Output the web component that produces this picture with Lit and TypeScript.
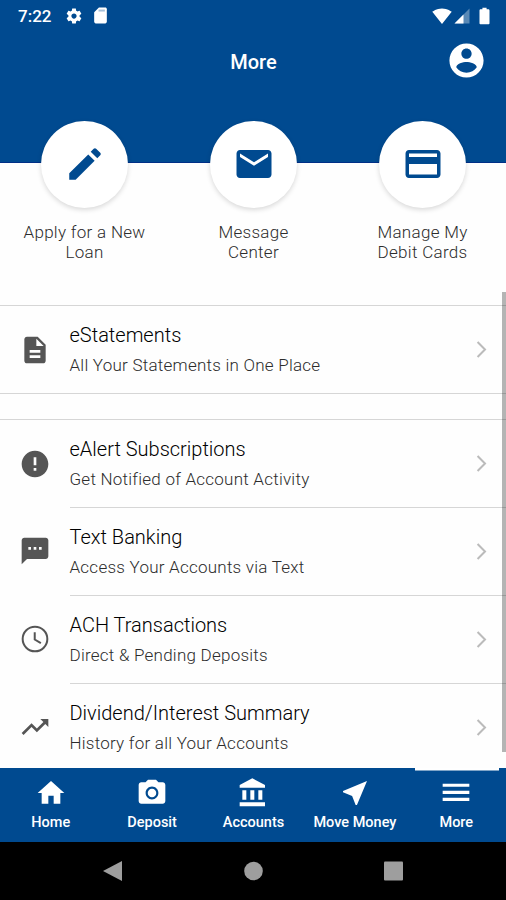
import { LitElement, html, css, svg } from "lit";
import { customElement, property } from "lit/decorators.js";

const ICONS: Record<string, unknown> = {
  gear: svg`<path d="M19.43 12.98c.04-.32.07-.64.07-.98s-.03-.66-.07-.98l2.11-1.65c.19-.15.24-.42.12-.64l-2-3.46c-.12-.22-.39-.3-.61-.22l-2.49 1c-.52-.4-1.08-.73-1.69-.98l-.38-2.65C14.46 2.18 14.25 2 14 2h-4c-.25 0-.46.18-.49.42l-.38 2.65c-.61.25-1.17.59-1.69.98l-2.49-1c-.23-.09-.49 0-.61.22l-2 3.46c-.13.22-.07.49.12.64l2.11 1.65c-.04.32-.07.65-.07.98s.03.66.07.98l-2.11 1.65c-.19.15-.24.42-.12.64l2 3.46c.12.22.39.3.61.22l2.49-1c.52.4 1.08.73 1.69.98l.38 2.65c.03.24.24.42.49.42h4c.25 0 .46-.18.49-.42l.38-2.65c.61-.25 1.17-.59 1.69-.98l2.49 1c.23.09.49 0 .61-.22l2-3.46c.12-.22.07-.49-.12-.64l-2.11-1.65zM12 15.5c-1.93 0-3.5-1.57-3.5-3.5s1.57-3.5 3.5-3.5 3.5 1.57 3.5 3.5-1.57 3.5-3.5 3.5z"/>`,
  sd: svg`<path d="M18 2h-8L4 8v12c0 1.1.9 2 2 2h12c1.1 0 2-.9 2-2V4c0-1.1-.9-2-2-2z"/><path class="dim" d="M9.500 4.500h8v2.500h-8z"/>`,
  wifi: svg`<path d="M12.01 21.49L23.64 7c-.45-.34-4.93-4-11.640-4C5.28 3 .81 6.66.36 7l11.630 14.490.01.01.01-.01z"/>`,
  signal: svg`<path fill-opacity=".35" d="M2 22h20V2z"/><path d="M14 10L2 22h12z"/>`,
  battery: svg`<path d="M16.500 4H14.500V2h-5v2H7.500C6.700 4 6 4.600 6 5.330v15.330C6 21.400 6.700 22 7.500 22h9c.8 0 1.500-.6 1.500-1.330V5.330C18 4.600 17.300 4 16.500 4z"/>`,
  account: svg`<path d="M12 2C6.480 2 2 6.480 2 12s4.480 10 10 10 10-4.480 10-10S17.520 2 12 2zm0 3c1.660 0 3 1.340 3 3s-1.340 3-3 3-3-1.340-3-3 1.340-3 3-3zm0 14.200c-2.500 0-4.710-1.280-6-3.220.03-1.990 4-3.080 6-3.080 1.990 0 5.970 1.090 6 3.080-1.290 1.940-3.500 3.220-6 3.220z"/>`,
  pencil: svg`<path d="M3 17.350V21h3.650L17.500 10.150l-3.650-3.650L3 17.350zM20.710 7.040c.39-.39.39-1.020 0-1.410l-2.340-2.340c-.39-.39-1.020-.39-1.410 0l-1.700 1.700 3.750 3.750 1.700-1.700z"/>`,
  mail: svg`<path d="M20 4H4c-1.100 0-1.990.9-1.990 2L2 18c0 1.100.9 2 2 2h16c1.100 0 2-.9 2-2V6c0-1.100-.9-2-2-2zm0 4l-8 5-8-5V6l8 5 8-5v2z"/>`,
  card: svg`<path d="M20 4H4c-1.110 0-1.990.89-1.990 2L2 18c0 1.110.89 2 2 2h16c1.110 0 2-.89 2-2V6c0-1.110-.89-2-2-2zm0 14H4v-6h16v6zm0-10H4V6h16v2z"/>`,
  document: svg`<path d="M14 2H6c-1.100 0-1.990.9-1.990 2L4 20c0 1.100.89 2 1.990 2H18c1.100 0 2-.9 2-2V8l-6-6zm2 16H8v-2h8v2zm0-4H8v-2h8v2zm-3-5V3.500L18.500 9H13z"/>`,
  alert: svg`<path d="M12 2C6.480 2 2 6.480 2 12s4.480 10 10 10 10-4.480 10-10S17.520 2 12 2zm1 15h-2v-2h2v2zm0-4h-2V7h2v6z"/>`,
  sms: svg`<path d="M20 2H4c-1.100 0-1.990.9-1.990 2L2 22l4-4h14c1.100 0 2-.9 2-2V4c0-1.100-.9-2-2-2zM9 11H7V9h2v2zm4 0h-2V9h2v2zm4 0h-2V9h2v2z"/>`,
  clock: svg`<path fill="none" stroke="currentColor" stroke-width="1.500" d="M12 2.750a9.250 9.250 0 1 0 0 18.500a9.250 9.250 0 1 0 0-18.500zM11.800 7v5.400l4.600 2.700"/>`,
  trend: svg`<path d="M16 6l2.290 2.290-4.880 4.880-4-4L2 16.590 3.410 18l6-6 4 4 6.300-6.290L22 12V6z"/>`,
  home: svg`<path d="M10 20v-6h4v6h5v-8h3L12 3 2 12h3v8z"/>`,
  camera: svg`<circle cx="12" cy="12" r="3.200"/><path d="M9 2L7.170 4H4c-1.100 0-2 .9-2 2v12c0 1.100.9 2 2 2h16c1.100 0 2-.9 2-2V6c0-1.100-.9-2-2-2h-3.170L15 2H9zm3 14.800c-2.650 0-4.800-2.150-4.800-4.800s2.150-4.800 4.800-4.800 4.800 2.150 4.800 4.800-2.150 4.800-4.800 4.800z"/>`,
  bank: svg`<path d="M4 10v7h3v-7H4zm6 0v7h3v-7h-3zM2 22h19v-3H2v3zm14-12v7h3v-7h-3zm-4.500-9L2 6v2h19V6l-9.500-5z"/>`,
  send: svg`<path d="M21 3L3 10.530v.98l6.840 2.650L12.480 21h.98L21 3z"/>`,
  menu: svg`<path d="M2 5h20v2.400H2zM2 10.300h20v2.400H2zM2 15.600h20V18H2z"/>`,
  chevron: svg`<path fill="none" stroke="currentColor" stroke-width="2.300" d="M7.500 3.500l8.500 8.500-8.500 8.500"/>`,
};

@customElement("app-icon")
export class AppIcon extends LitElement {
  @property() name = "";
  static styles = css`
    :host { display: block; width: 32px; height: 32px; flex: none; }
    svg { display: block; width: 100%; height: 100%; fill: currentColor; }
    .dim { fill: #004a90; fill-opacity: 0.35; }
  `;
  render() {
    return html`<svg viewBox="0 0 24 24">${ICONS[this.name]}</svg>`;
  }
}

interface Row { icon: string; title: string; text: string; }

const ACTIONS = [
  { icon: "pencil", lines: ["Apply for a New", "Loan"] },
  { icon: "mail", lines: ["Message", "Center"] },
  { icon: "card", lines: ["Manage My", "Debit Cards"] },
];

const GROUPS: Row[][] = [
  [{ icon: "document", title: "eStatements", text: "All Your Statements in One Place" }],
  [
    { icon: "alert", title: "eAlert Subscriptions", text: "Get Notified of Account Activity" },
    { icon: "sms", title: "Text Banking", text: "Access Your Accounts via Text" },
    { icon: "clock", title: "ACH Transactions", text: "Direct & Pending Deposits" },
    { icon: "trend", title: "Dividend/Interest Summary", text: "History for all Your Accounts" },
  ],
];

const TABS = [
  { icon: "home", label: "Home" },
  { icon: "camera", label: "Deposit" },
  { icon: "bank", label: "Accounts" },
  { icon: "send", label: "Move Money" },
  { icon: "menu", label: "More", active: true },
];

@customElement("app-root")
export class AppRoot extends LitElement {
  static styles = css`
    :host {
      display: flex; flex-direction: column; position: relative;
      width: 506px; height: 900px; overflow: hidden;
      background: #fefefe; font-family: Roboto, sans-serif; color: #222;
    }
    .header { flex: none; height: 163px; box-sizing: border-box; background: #004a90; border-bottom: 1px solid #002f86; color: #fff; }
    .status { display: flex; align-items: center; height: 31px; padding: 0 10px 0 18px; }
    .time { font-size: 17px; font-weight: 500; width: 46px; }
    .gear { width: 18px; height: 18px; margin-left: 1px; }
    .sd { width: 19px; height: 19px; margin-left: 8px; }
    .wifi { width: 20px; height: 20px; margin-left: auto; }
    .signal { width: 18px; height: 18px; margin-left: 1px; }
    .battery { width: 21px; height: 20px; margin-left: 3px; margin-right: 1px; }
    .bar { display: grid; grid-template-columns: 60px 1fr 60px; align-items: center; height: 59px; }
    .heading { grid-column: 2; text-align: center; font-size: 20px; font-weight: 500; line-height: 24px; padding: 2px 0 0 1px; }
    .profile { width: 41px; height: 41px; justify-self: center; margin-right: 20px; }
    .actions { display: grid; grid-template-columns: repeat(3, 1fr); height: 184px; margin: -42px -1px 0 0; flex: none; }
    .action { display: flex; flex-direction: column; align-items: center; }
    .disc { display: grid; place-items: center; width: 87px; height: 87px; box-sizing: border-box; padding-bottom: 1px; border-radius: 50%; background: #fff; color: #004a90; box-shadow: 0 2px 5px rgba(0,0,0,.15); }
    .disc app-icon { width: 42px; height: 42px; }
    .caption { margin-top: 14px; text-align: center; font-size: 17px; font-weight: 300; line-height: 20px; letter-spacing: 0.3px; color: #2c2c2c; }
    .group { border-top: 1px solid #d6d6d6; border-bottom: 1px solid #d6d6d6; margin-bottom: 25px; }
    .row { display: flex; height: 88px; padding-left: 19px; align-items: center; box-sizing: border-box; color: #555; }
    .row:first-of-type { height: 87px; }
    .body { flex: 1; height: 100%; margin-left: 18.500px; display: flex; align-items: center; box-sizing: border-box; }
    .row + .row .body { border-top: 1px solid #d6d6d6; }
    .words { flex: 1; }
    .title { font-size: 20px; font-weight: 300; line-height: 30px; color: #000; }
    .text { font-size: 17px; font-weight: 300; line-height: 30px; letter-spacing: 0.24px; color: #2c2c2c; }
    .chevron { width: 21px; height: 21px; color: #bbb; margin-right: 14px; }
    .list { flex: 1; min-height: 0; overflow: hidden; }
    .thumb { position: absolute; right: 0; top: 292px; width: 4px; height: 460px; background: rgba(0,0,0,.29); }
    .tabs { flex: none; background: #004a90; color: #fff; }
    .track { display: grid; grid-template-columns: repeat(5, 1fr); height: 74px; margin-right: -1px; }
    .tab { display: flex; flex-direction: column; align-items: center; padding-top: 9px; font-size: 14.500px; font-weight: 500; line-height: 18px; white-space: nowrap; }
    .tab.active { background: linear-gradient(#fff, #fff) 9px 0 / 84px 2.500px no-repeat; }
    .tab span { margin-top: 5px; }
    .system { flex: none; height: 58px; background: #000; display: flex; align-items: center; justify-content: center; gap: 121.500px; }
    .system svg { display: block; width: 19px; height: 20px; fill: #9e9e9e; }
  `;

  private row(r: Row) {
    return html`<div class="row">
      <app-icon name=${r.icon}></app-icon>
      <div class="body">
        <div class="words"><div class="title">${r.title}</div><div class="text">${r.text}</div></div>
        <app-icon class="chevron" name="chevron"></app-icon>
      </div>
    </div>`;
  }

  render() {
    return html`
      <div class="header">
        <div class="status">
          <span class="time">7:22</span>
          <app-icon class="gear" name="gear"></app-icon>
          <app-icon class="sd" name="sd"></app-icon>
          <app-icon class="wifi" name="wifi"></app-icon>
          <app-icon class="signal" name="signal"></app-icon>
          <app-icon class="battery" name="battery"></app-icon>
        </div>
        <div class="bar">
          <div class="heading">More</div>
          <app-icon class="profile" name="account"></app-icon>
        </div>
      </div>
      <div class="actions">
        ${ACTIONS.map((a) => html`<div class="action">
          <div class="disc"><app-icon name=${a.icon}></app-icon></div>
          <div class="caption">${a.lines[0]}<br />${a.lines[1]}</div>
        </div>`)}
      </div>
      <div class="list">${GROUPS.map((g) => html`<div class="group">${g.map((r) => this.row(r))}</div>`)}</div>
      <div class="thumb"></div>
      <div class="tabs"><div class="track">
        ${TABS.map((t) => html`<div class="tab ${t.active ? "active" : ""}"><app-icon name=${t.icon}></app-icon><span>${t.label}</span></div>`)}
      </div></div>
      <div class="system">
        <svg viewBox="0 0 19 20"><path d="M0 10L19 0v20z" /></svg>
        <svg viewBox="0 0 19 20"><circle cx="9.500" cy="10" r="9.300" /></svg>
        <svg viewBox="0 0 19 20"><rect y=".5" width="19" height="19" rx="1" /></svg>
      </div>
    `;
  }
}
